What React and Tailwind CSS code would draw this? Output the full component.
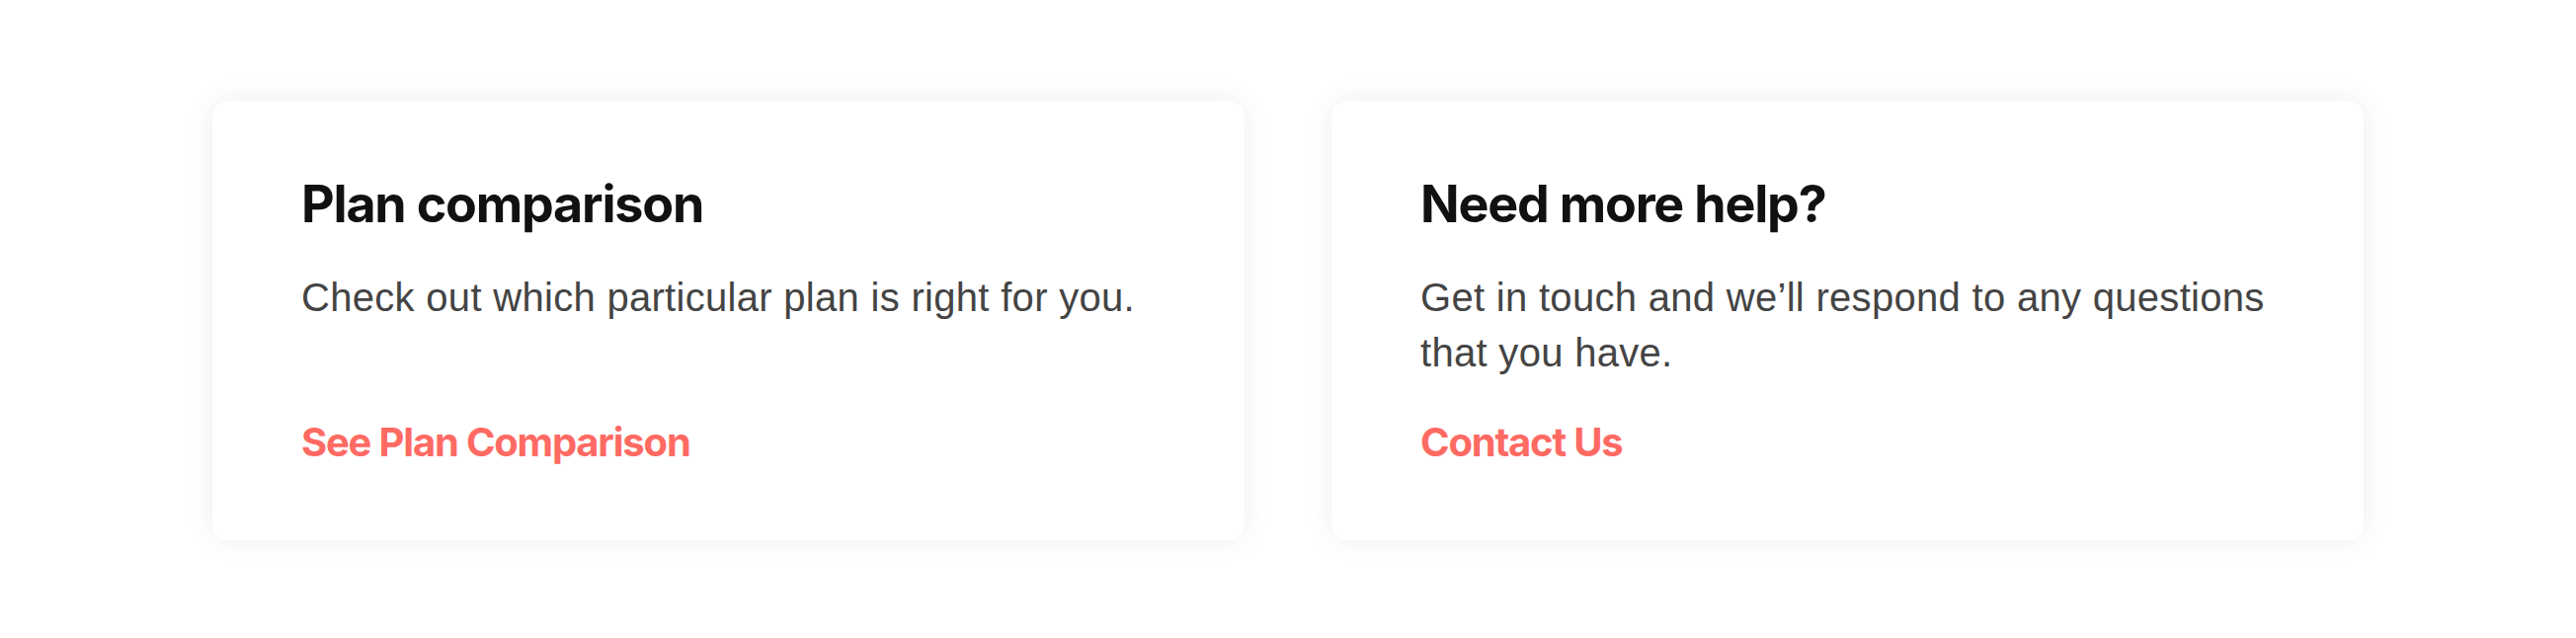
import React from "react";

const cards = [
  {
    title: "Plan comparison",
    body: "Check out which particular plan is right for you.",
    link: "See Plan Comparison",
  },
  {
    title: "Need more help?",
    body: "Get in touch and we’ll respond to any questions that you have.",
    link: "Contact Us",
  },
];

function HelpCard({ title, body, link }) {
  return (
    <div className="flex flex-col rounded-2xl bg-white pl-[90px] pr-[90px] pt-[74px] pb-[75px] shadow-[0_0_30px_rgba(0,0,0,0.07)]">
      {/* Heading */}
      <h3 className="font-['Inter',sans-serif] text-[52px] leading-[62px] font-bold tracking-[-1.2px] text-[#111111]">
        {title}
      </h3>
      <p className="mt-[35px] font-['Liberation_Sans',Arial,sans-serif] text-[40px] leading-[56px] tracking-[0.3px] text-[#444444]">
        {body}
      </p>
      {/* Link sits at the bottom of the card */}
      <div className="mt-auto pt-[39px]">
        <a
          href="#"
          className="font-['Inter',sans-serif] text-[40px] leading-[48px] font-bold tracking-[-1.2px] text-[#ff6a63]"
        >
          {link}
        </a>
      </div>
    </div>
  );
}

export default function App() {
  return (
    <div className="min-h-[646px] bg-white pt-[102px] pb-[99px]">
      <div className="mx-auto grid w-[2178px] grid-cols-2 gap-[88px]">
        {cards.map((c) => (
          <HelpCard key={c.title} {...c} />
        ))}
      </div>
    </div>
  );
}
